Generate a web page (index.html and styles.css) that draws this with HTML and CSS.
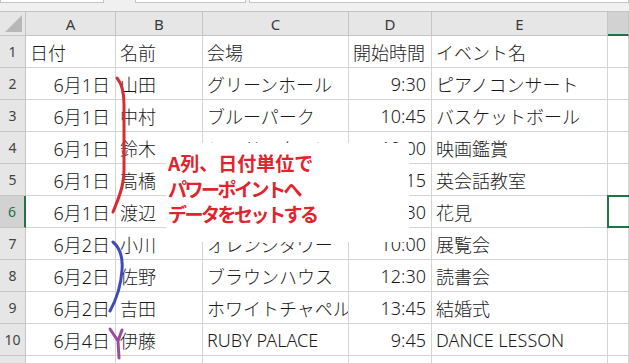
FILE: index.html
```html
<!DOCTYPE html>
<html lang="ja">
<head>
    <meta charset="UTF-8">
    <title>イベント一覧</title>
    <link rel="stylesheet" href="styles.css">
</head>
<body>
    <div class="book">
        <div class="formula-strip">
            <div class="name-box"></div>
            <div class="fx-box"></div>
            <div class="formula-box"></div>
        </div>

        <div class="sheet">
            <div class="corner"><span class="corner-tri"></span></div>
            <div class="col-head">A</div>
            <div class="col-head">B</div>
            <div class="col-head">C</div>
            <div class="col-head">D</div>
            <div class="col-head">E</div>
            <div class="col-head on"></div>

            <div class="row-head">1</div>
            <div class="cell">日付</div>
            <div class="cell">名前</div>
            <div class="cell">会場</div>
            <div class="cell">開始時間</div>
            <div class="cell">イベント名</div>
            <div class="cell"></div>

            <div class="row-head">2</div>
            <div class="cell num">6月1日</div>
            <div class="cell">山田</div>
            <div class="cell">グリーンホール</div>
            <div class="cell num">9:30</div>
            <div class="cell">ピアノコンサート</div>
            <div class="cell"></div>

            <div class="row-head">3</div>
            <div class="cell num">6月1日</div>
            <div class="cell">中村</div>
            <div class="cell">ブルーパーク</div>
            <div class="cell num">10:45</div>
            <div class="cell">バスケットボール</div>
            <div class="cell"></div>

            <div class="row-head">4</div>
            <div class="cell num">6月1日</div>
            <div class="cell">鈴木</div>
            <div class="cell">レッドスクエア</div>
            <div class="cell num">12:00</div>
            <div class="cell">映画鑑賞</div>
            <div class="cell"></div>

            <div class="row-head">5</div>
            <div class="cell num">6月1日</div>
            <div class="cell">高橋</div>
            <div class="cell">イエローガーデン</div>
            <div class="cell num">11:15</div>
            <div class="cell">英会話教室</div>
            <div class="cell"></div>

            <div class="row-head on">6</div>
            <div class="cell num">6月1日</div>
            <div class="cell">渡辺</div>
            <div class="cell">ピンクテラス</div>
            <div class="cell num">14:30</div>
            <div class="cell">花見</div>
            <div class="cell active"></div>

            <div class="row-head">7</div>
            <div class="cell num">6月2日</div>
            <div class="cell">小川</div>
            <div class="cell">オレンジタワー</div>
            <div class="cell num">10:00</div>
            <div class="cell">展覧会</div>
            <div class="cell"></div>

            <div class="row-head">8</div>
            <div class="cell num">6月2日</div>
            <div class="cell">佐野</div>
            <div class="cell">ブラウンハウス</div>
            <div class="cell num">12:30</div>
            <div class="cell">読書会</div>
            <div class="cell"></div>

            <div class="row-head">9</div>
            <div class="cell num">6月2日</div>
            <div class="cell">吉田</div>
            <div class="cell">ホワイトチャペル</div>
            <div class="cell num">13:45</div>
            <div class="cell">結婚式</div>
            <div class="cell"></div>

            <div class="row-head">10</div>
            <div class="cell num">6月4日</div>
            <div class="cell">伊藤</div>
            <div class="cell">RUBY PALACE</div>
            <div class="cell num">9:45</div>
            <div class="cell">DANCE LESSON</div>
            <div class="cell"></div>

            <div class="row-head">11</div>
            <div class="cell"></div>
            <div class="cell"></div>
            <div class="cell"></div>
            <div class="cell"></div>
            <div class="cell"></div>
            <div class="cell"></div>
        </div>

        <!-- 手書きの括弧 -->
        <svg class="marks" width="629" height="363" viewBox="0 0 629 363">
            <path d="M117,78 C122,84 124,92 124,104 L124,170 C124,186 118,200 113,212" stroke="#dc2a30"/>
            <path d="M113,242 C120,248 123,258 122,270 C121,287 116,300 110,311" stroke="#3d4bbf"/>
            <path d="M110,329 L118,341 L119,358 M122,330 L118,341" stroke="#9a4d9c"/>
        </svg>

        <div class="note">
            <span class="note-line">A列、日付単位で</span>
            <span class="note-line tight">パワーポイントへ</span>
            <span class="note-line tight">データをセットする</span>
        </div>
    </div>
</body>
</html>
```

FILE: styles.css
```css
:root {
    --grid: #d4d4d4;
    --head: #e6e6e6;
    --head-line: #c4c4c4;
    --excel: #217346;
}

* {
    box-sizing: border-box;
}

body {
    margin: 0;
    width: 629px;
    height: 363px;
    overflow: hidden;
    background: #fff;
    font-family: "Noto Sans", "Noto Sans CJK JP", sans-serif;
}

.book {
    position: relative;
    width: 629px;
    height: 363px;
    overflow: hidden;
}

/* 数式バーの下端 */
.formula-strip {
    height: 12px;
    display: flex;
    align-items: flex-start;
    background: #f0f0f0;
    border-bottom: 1px solid var(--head-line);
}

.name-box,
.fx-box,
.formula-box {
    height: 3px;
    background: #fff;
    border: 1px solid #c6c6c6;
    border-top: none;
}

.name-box { width: 104px; }
.fx-box { width: 111px; margin-left: 31px; }
.formula-box { flex: 1; margin-left: 3px; }

.sheet {
    display: grid;
    grid-template-columns: 26px 90px 87px 146px 83px 176px 1fr;
    grid-template-rows: 24px repeat(11, 32px);
}

.corner {
    background: var(--head);
    border-right: 1px solid var(--head-line);
    border-bottom: 1px solid var(--head-line);
    position: relative;
}

.corner-tri {
    position: absolute;
    right: 3px;
    bottom: 3px;
    width: 0;
    height: 0;
    border-left: 17px solid transparent;
    border-bottom: 17px solid #b8b8b8;
}

.col-head {
    background: var(--head);
    border-right: 1px solid var(--head-line);
    border-bottom: 1px solid var(--head-line);
    display: flex;
    align-items: center;
    justify-content: center;
    font-size: 15px;
    color: #3a3a3a;
}

.col-head.on {
    background: #d2d2d2;
    border-bottom: 2px solid var(--excel);
}

.row-head {
    background: var(--head);
    border-right: 1px solid var(--head-line);
    border-bottom: 1px solid var(--head-line);
    display: flex;
    align-items: center;
    justify-content: center;
    font-size: 14px;
    color: #444;
}

.row-head.on {
    background: #d2d2d2;
    border-right: 2px solid var(--excel);
    color: var(--excel);
}

.cell {
    border-right: 1px solid var(--grid);
    border-bottom: 1px solid var(--grid);
    display: flex;
    align-items: center;
    padding: 1px 4px 0 4px;
    font-size: 18px;
    font-weight: 300;
    color: #1a1a1a;
    white-space: nowrap;
    overflow: hidden;
}

.cell.num {
    justify-content: flex-end;
    padding-right: 5px;
}

.cell.active {
    position: relative;
    overflow: visible;
}

.cell.active::after {
    content: "";
    position: absolute;
    left: -1px;
    top: -1px;
    right: -4px;
    bottom: -1px;
    border: 2px solid var(--excel);
}

.marks {
    position: absolute;
    left: 0;
    top: 0;
    pointer-events: none;
}

.marks path {
    fill: none;
    stroke-width: 3;
    stroke-linecap: round;
    stroke-linejoin: round;
}

/* 吹き出しメモ */
.note {
    position: absolute;
    left: 166px;
    top: 143px;
    width: 243px;
    height: 99px;
    background: #fff;
    padding: 7px 0 0 2px;
    display: flex;
    flex-direction: column;
    color: #e0232c;
    font-family: "Noto Sans CJK JP", sans-serif;
    font-weight: 700;
    font-size: 19px;
    line-height: 25.5px;
}

.note-line {
    white-space: nowrap;
}

.note-line.tight {
    letter-spacing: -2.5px;
}
```
